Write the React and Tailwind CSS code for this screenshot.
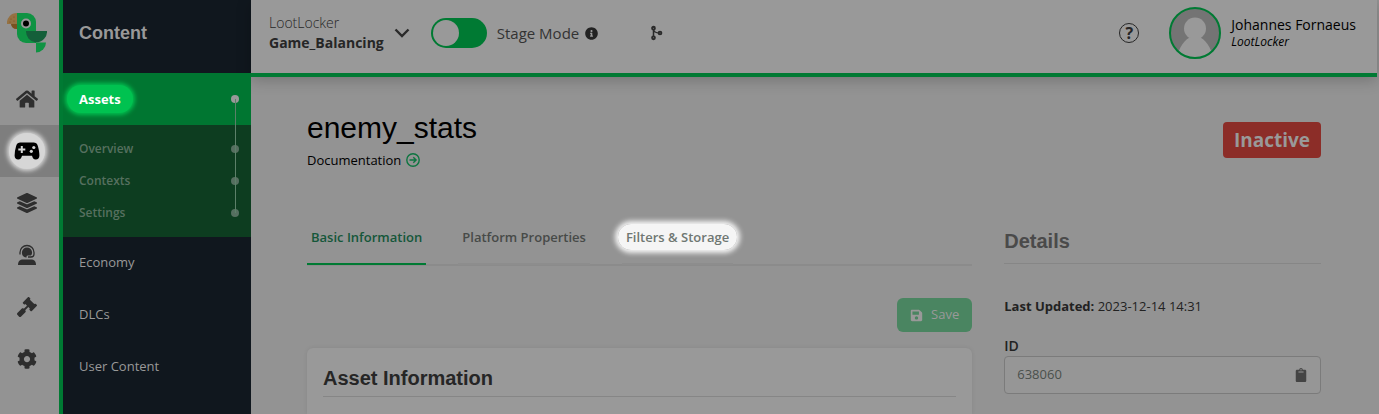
import React from "react";
import { FaHome, FaLayerGroup, FaGavel, FaCog, FaSave, FaInfoCircle, FaClipboard } from "react-icons/fa";

function ParrotLogo() {
  return (
    <svg viewBox="0 0 40 40" className="h-10 w-10" aria-hidden="true">
      <path d="M0 11A10 10 0 0 1 10 0V16A6 6 0 0 1 4 11Z" fill="#957142" />
      <path d="M4 11H10V16A6 6 0 0 1 4 11Z" fill="#7a5220" />
      <path d="M10 0H20A9 9 0 0 1 29 9V30H19A9 9 0 0 1 10 21Z" fill="#0f9343" />
      <path d="M19 18H40A11 11 0 0 1 29 29.500A11 11 0 0 1 19 18Z" fill="#145f3a" />
      <path d="M29 29.500H39A10 10 0 0 1 29 39.500Z" fill="#0f9343" />
      <circle cx="19" cy="10.500" r="5" fill="#999999" />
      <circle cx="19" cy="10.500" r="3" fill="#000000" />
      <g fill="#7a5220">
        <circle cx="4" cy="6" r=".6" />
        <circle cx="7" cy="4" r=".6" />
        <circle cx="7" cy="8" r=".6" />
        <circle cx="3" cy="9" r=".6" />
      </g>
    </svg>
  );
}

function ControllerIcon() {
  return (
    <svg viewBox="0 0 26 18" className="h-[18px] w-[26px]" aria-hidden="true">
      <path
        d="M5 .8C6.500 .3 8 .5 9.500 .5H16.500C18 .5 19.500 .3 21 .8C22.800 1.400 23.500 2.600 24 4.500C24.800 7.500 25.400 10.500 25.400 13.500C25.400 16 24 17.500 21.800 17.500C19.500 17.500 18.600 16 18 13.800H8C7.400 16 6.500 17.500 4.200 17.500C2 17.500 .6 16 .6 13.500C.6 10.500 1.200 7.500 2 4.500C2.500 2.600 3.200 1.400 5 .8Z"
        fill="#000000"
      />
      <path d="M7.800 4V11M4.300 7.500H11.300" stroke="#d6d6d6" strokeWidth="2" />
      <circle cx="19.800" cy="5.500" r="1.600" fill="#d6d6d6" />
      <circle cx="17.300" cy="9.300" r="1.600" fill="#d6d6d6" />
    </svg>
  );
}

function AgentIcon() {
  return (
    <svg viewBox="0 0 20 22" className="h-[22px] w-5" fill="none" aria-hidden="true">
      <path d="M3 10.500V8.500a7 7 0 0 1 14 0V10c0 2-1 3-3 3H11" stroke="#2e2e2e" strokeWidth="1.300" />
      <path d="M4.900 8.500a5.100 5.100 0 0 1 10.200 0c0 1.200-.4 2.200-1.100 3H11.200a1.600 1.600 0 0 0-1.600 2 5.100 5.100 0 0 1-4.700-5Z" fill="#2e2e2e" />
      <path d="M1 21c0-3.800 2-5.500 5-5.500h8c3 0 5 1.700 5 5.500Z" fill="#2e2e2e" />
    </svg>
  );
}

function MergeIcon() {
  return (
    <svg viewBox="0 0 14 16" className="h-4 w-[14px]" fill="none" stroke="#2a2a2a" aria-hidden="true">
      <path d="M3.500 4V12M3.500 4.500C4 7.500 6 8 9.500 8" strokeWidth="1.500" />
      <circle cx="3.500" cy="3.200" r="1.400" strokeWidth="1.900" />
      <circle cx="3.500" cy="12.800" r="1.400" strokeWidth="1.900" />
      <circle cx="10" cy="8" r="1.400" strokeWidth="1.900" />
    </svg>
  );
}

const railItems = [
  { label: "Home", icon: <FaHome size={22} /> },
  { label: "Game", icon: <ControllerIcon />, active: true },
  { label: "Systems", icon: <FaLayerGroup size={20} /> },
  { label: "Players", icon: <AgentIcon /> },
  { label: "Tools", icon: <FaGavel size={20} /> },
  { label: "Settings", icon: <FaCog size={20} /> },
];

function Rail() {
  return (
    <nav aria-label="Primary" className="flex w-[63px] shrink-0 flex-col border-r-4 border-[#007a33] bg-[#939393]">
      <a href="#" aria-label="LootLocker" className="flex h-[73px] items-start pl-[7px] pt-[13px]">
        <ParrotLogo />
      </a>
      {railItems.map((item) => (
        <a
          key={item.label}
          href="#"
          aria-label={item.label}
          className={
            item.active
              ? "flex h-[52px] items-center justify-center bg-[#7e7e7e] pr-[5px] text-black"
              : "flex h-[52px] items-center justify-center pr-[5px] text-[#2e2e2e]"
          }
        >
          {item.active ? (
            <span className="flex size-9 items-center justify-center rounded-full bg-[#d6d6d6] shadow-[0_0_4px_2px_#d6d6d6]">
              {item.icon}
            </span>
          ) : (
            item.icon
          )}
        </a>
      ))}
    </nav>
  );
}

function SideMenu() {
  return (
    <aside className="flex w-[188px] shrink-0 flex-col bg-[#10171e] text-[13px]">
      <h2 className="flex h-[73px] items-center pb-2 pl-4 font-['Liberation_Sans',sans-serif] text-lg font-bold text-[#999999]">
        Content
      </h2>
      <div className="relative">
        <a href="#" className="flex h-[52px] items-center justify-between bg-[#007631] pl-1 pr-3 font-bold text-white">
          <span className="rounded-full bg-[#00c250] px-3 py-1 leading-5 shadow-[0_0_4px_2px_#00c250]">Assets</span>
          <span className="size-2 rounded-full bg-[#999999]" />
        </a>
        <div className="flex h-28 flex-col justify-center bg-[#0d3d20] text-xs font-semibold text-[#56705f]">
          {["Overview", "Contexts", "Settings"].map((label) => (
            <a key={label} href="#" className="flex h-8 items-center justify-between pl-4 pr-3">
              {label}
              <span className="size-2 rounded-full bg-[#566f60]" />
            </a>
          ))}
        </div>
        <span className="absolute bottom-6 right-[15px] top-[26px] w-px bg-[#5c8069]" />
      </div>
      {["Economy", "DLCs", "User Content"].map((label) => (
        <a key={label} href="#" className="flex h-[52px] items-center pl-4 text-[#999999]">
          {label}
        </a>
      ))}
    </aside>
  );
}

function Header() {
  return (
    <header className="flex items-center border-b-4 border-[#007a33] bg-[#999999] pl-[18px] pr-[21px] shadow-[0_3px_14px_rgba(0,0,0,0.22)]">
      <div className="flex h-[73px] flex-1 items-center pb-[7px]">
        <button type="button" className="flex items-center gap-[10px] text-left text-[#262626]">
          <span className="flex flex-col text-sm leading-5">
            <span className="font-light">LootLocker</span>
            <span className="font-bold">Game_Balancing</span>
          </span>
          <svg viewBox="0 0 16 10" className="h-[10px] w-4" fill="none" stroke="#2a2a2a" strokeWidth="2.400" aria-hidden="true">
            <path d="M1.500 1.500L8 8L14.500 1.500" />
          </svg>
        </button>
        <label className="ml-[21px] flex items-center gap-[10px] text-[15px] text-[#333333]">
          <input type="checkbox" className="peer sr-only" />
          <span className="flex h-[30px] w-14 items-center rounded-full bg-[#007a33] p-[2px]">
            <span className="size-[26px] rounded-full bg-[#999999]" />
          </span>
          Stage Mode
        </label>
        <FaInfoCircle size={13} color="#222222" className="ml-[6px]" />
        <button type="button" aria-label="Versions" className="ml-[52px]">
          <MergeIcon />
        </button>
      </div>
      <button
        type="button"
        aria-label="Help"
        className="mb-[7px] flex size-5 items-center justify-center rounded-full border border-[#262626] text-base font-bold text-[#262626]"
      >
        ?
      </button>
      <div className="mb-[7px] ml-[30px] flex items-center gap-[10px]">
        <svg viewBox="0 0 52 52" className="size-[52px]" aria-hidden="true">
          <clipPath id="avatar">
            <circle cx="26" cy="26" r="25" />
          </clipPath>
          <g clipPath="url(#avatar)">
            <rect width="52" height="52" fill="#747474" />
            <circle cx="26" cy="21.500" r="11" fill="#999999" />
            <path d="M8 52C9 41 16 32 22 30H30C36 32 43 41 44 52Z" fill="#999999" />
          </g>
          <circle cx="26" cy="26" r="25" fill="none" stroke="#007a33" strokeWidth="2" />
        </svg>
        <p className="flex flex-col leading-4 text-black">
          <span className="text-sm leading-[18px]">Johannes Fornaeus</span>
          <span className="text-xs italic">LootLocker</span>
        </p>
      </div>
    </header>
  );
}

function Tabs() {
  return (
    <div role="tablist" className="flex gap-8 border-b-2 border-[#8b8b8b] text-[13px] font-semibold text-[#474a48]">
      <button type="button" role="tab" aria-selected="true" className="-mb-px h-10 border-b-2 border-[#007a33] px-1 pb-3 text-[#15573a]">
        Basic Information
      </button>
      <button type="button" role="tab" className="-mb-px h-10 border-b-2 border-[#8d8d8d] px-1 pb-3">
        Platform Properties
      </button>
      <button type="button" role="tab" className="-mb-px h-10 border-b-2 border-[#8d8d8d] pb-3 text-[#6f7772]">
        <span className="-mx-1 rounded-full bg-[#f5f5f5] px-2 py-1 shadow-[0_0_5px_3px_#f5f5f5]">Filters &amp; Storage</span>
      </button>
    </div>
  );
}

export default function App() {
  return (
    <div className="flex min-h-screen bg-[#939393] pr-[2px] font-['Open_Sans','Noto_Sans',sans-serif]">
      <Rail />
      <SideMenu />
      <div className="flex min-w-0 flex-1 flex-col">
        <Header />
        <main className="flex flex-1 flex-col px-14 pt-[31px]">
          <div className="flex items-start justify-between">
            <div>
              <h1 className="font-['Liberation_Sans',sans-serif] text-3xl leading-10 text-black">enemy_stats</h1>
              <a href="#" className="flex items-center gap-[5px] text-[13px] leading-6 text-black">
                Documentation
                <svg viewBox="0 0 14 14" className="size-[14px]" fill="none" stroke="#0d7540" strokeWidth="1.400" aria-hidden="true">
                  <circle cx="7" cy="7" r="6.200" />
                  <path d="M3.500 7H10M7.300 4.200L10.100 7L7.300 9.800" />
                </svg>
              </a>
            </div>
            <span className="mt-[14px] rounded bg-[#8c2d28] px-[11px] text-[19px] font-bold leading-9 text-[#999999]">Inactive</span>
          </div>
          <div className="mt-[53px] grid flex-1 grid-cols-[minmax(0,2.1fr)_minmax(0,1fr)] gap-8">
            <section className="flex flex-col">
              <Tabs />
              <button
                type="button"
                className="mt-8 flex h-[34px] items-center gap-2 self-end rounded-md bg-[#4a8561] px-[13px] text-[13px] text-[#999999]"
              >
                <FaSave size={13} />
                Save
              </button>
              <div className="mt-4 flex-1 rounded-t-md bg-[#999999] px-4 pt-4 shadow-[0_0_4px_rgba(0,0,0,0.08)]">
                <h2 className="border-b border-[#868686] pb-1 font-['Liberation_Sans',sans-serif] text-xl font-bold text-[#262626]">
                  Asset Information
                </h2>
              </div>
            </section>
            <section className="pt-[2px] text-[13px] text-[#222222]">
              <h2 className="border-b border-[#868686] pb-2 font-['Liberation_Sans',sans-serif] text-xl font-bold text-[#4a4a4a]">
                Details
              </h2>
              <p className="mt-8 leading-5">
                <b>Last Updated:</b> 2023-12-14 14:31
              </p>
              <label htmlFor="asset-id" className="mt-5 block text-sm font-semibold leading-5">
                ID
              </label>
              <div className="flex h-[38px] items-center rounded border border-[#7b7b7b] bg-[#969696] px-3">
                <input id="asset-id" readOnly value="638060" className="min-w-0 flex-1 bg-transparent text-[#4a504c] outline-none" />
                <button type="button" aria-label="Copy ID">
                  <FaClipboard size={14} color="#444444" />
                </button>
              </div>
            </section>
          </div>
        </main>
      </div>
    </div>
  );
}
